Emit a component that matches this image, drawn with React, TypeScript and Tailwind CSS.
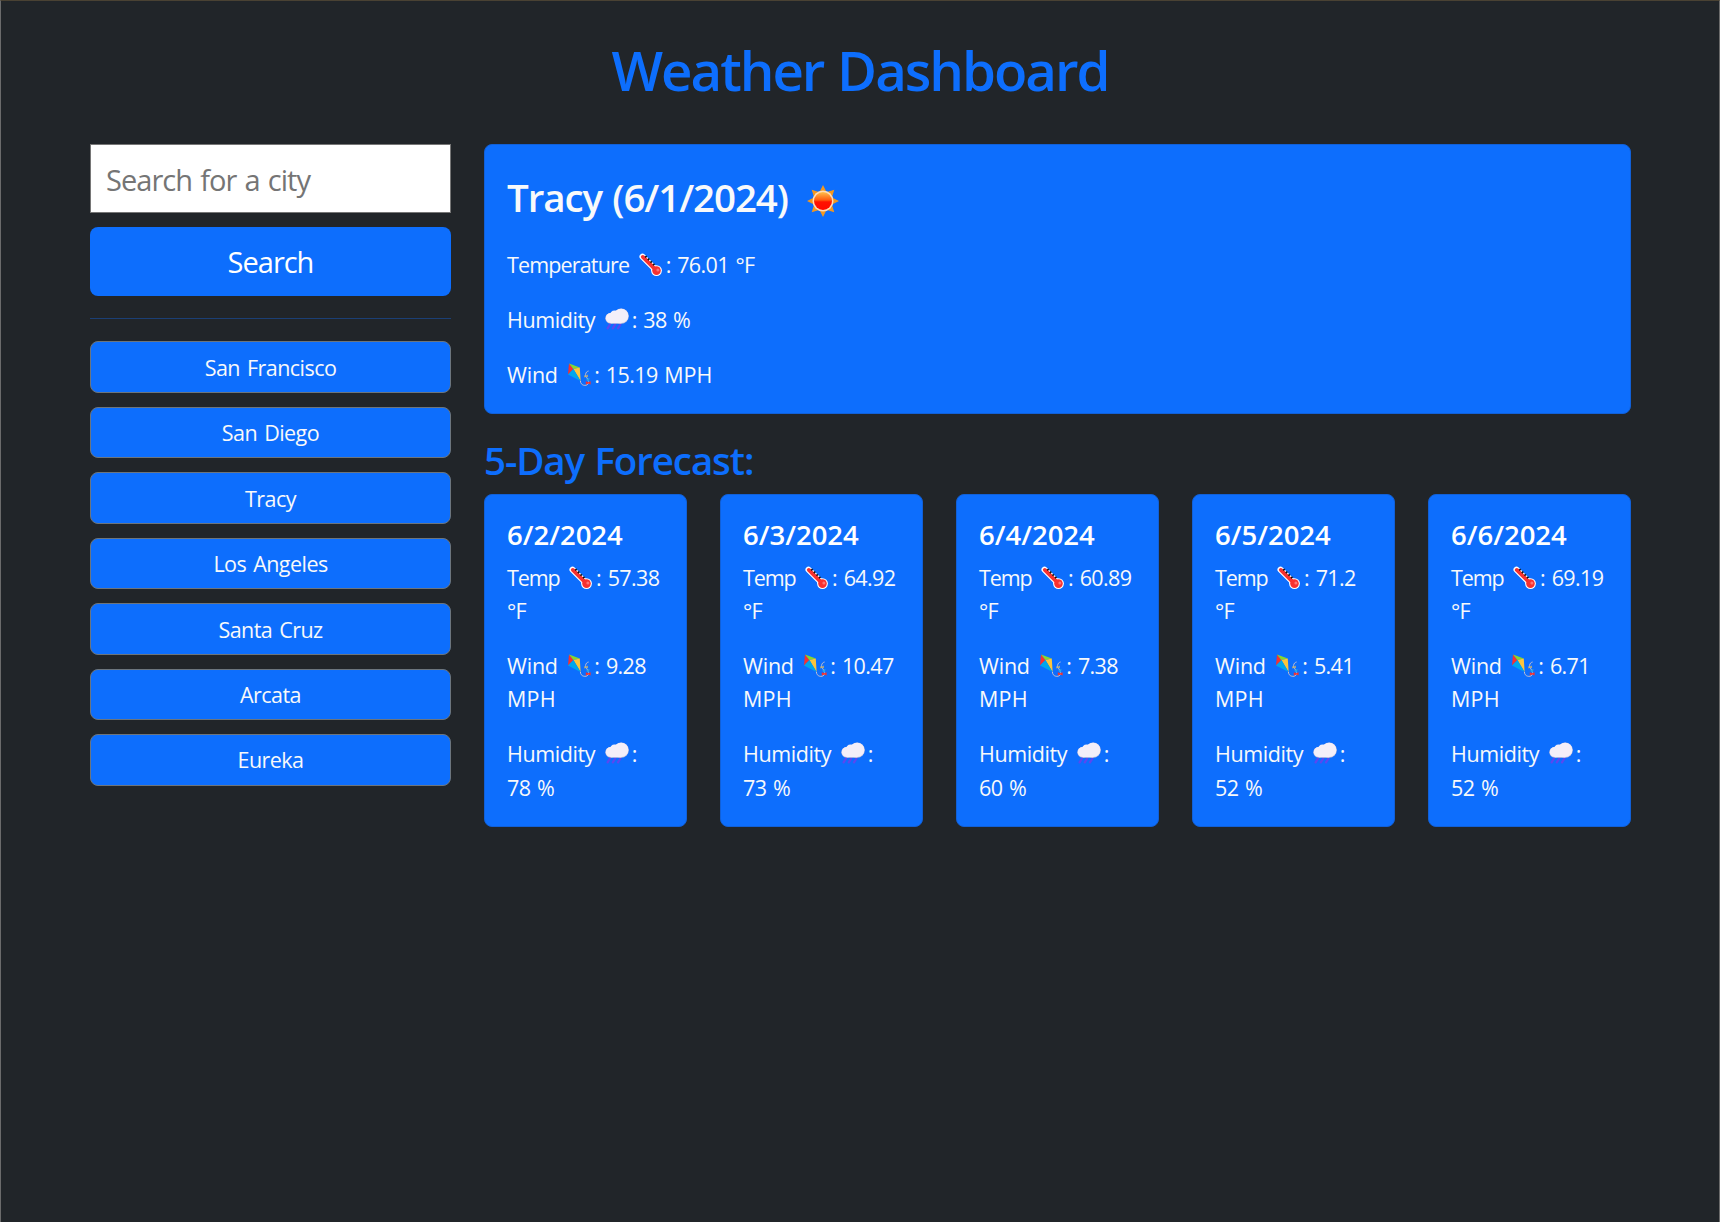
import React from "react";

function Thermometer() {
  return (
    <svg viewBox="0 0 24 24" className="mx-[3px] inline-block h-6 w-6 align-[-4px]">
      <path d="M3.500 3.700L17 17.200" stroke="#fff" strokeWidth="6" strokeLinecap="round" />
      <circle cx="17.500" cy="17.600" r="5.400" fill="#fff" />
      <path d="M3.800 3.900L17 17.200" stroke="#f8312f" strokeWidth="3.800" strokeLinecap="round" />
      <circle cx="17.500" cy="17.600" r="4.300" fill="#f8312f" />
      <circle cx="18.900" cy="16.900" r="1.500" fill="#ff7373" />
      <path d="M6.200 4.400l1.500-1.300M8.800 7l1.500-1.300M11.400 9.600l1.500-1.300M14 12.200l1.500-1.300" stroke="#111" strokeWidth="1.700" />
    </svg>
  );
}

function RainCloud() {
  return (
    <svg viewBox="0 0 24 24" className="mx-[3px] inline-block h-6 w-6 align-[-4px]">
      <path d="M5 16.500l-2.400 3.800M10.200 16.500l-2.400 3.800M15.400 16.500l-2.400 3.800" stroke="#5a48f0" strokeWidth="2.300" strokeLinecap="round" />
      <g fill="#cfc6dc">
        <circle cx="5.600" cy="10.300" r="5.300" />
        <circle cx="16.200" cy="8.100" r="7.600" />
        <path d="M5.600 8H16.200V15.700H5.600Z" />
      </g>
      <g fill="#f4eff9">
        <circle cx="5.700" cy="10" r="4.900" />
        <circle cx="9.600" cy="7.400" r="4.900" />
        <circle cx="16.100" cy="7.900" r="7.200" />
        <path d="M5.700 8H16.100V15.100H5.700Z" />
      </g>
    </svg>
  );
}

function Kite() {
  return (
    <svg viewBox="0 0 24 24" className="mx-[3px] inline-block h-6 w-6 align-[-4px]">
      <path d="M2 .5L6.400 6L1 11.500Z" fill="#f8312f" />
      <path d="M2 .5L12.800 4.600L6.400 6Z" fill="#86d72f" />
      <path d="M12.800 4.600L13.600 18L6.400 6Z" fill="#fcc53c" />
      <path d="M1 11.500L6.400 6L13.600 18Z" fill="#00a6ed" />
      <path d="M13.400 17.800C13.400 24 22.500 23.500 21.600 18.500C21.200 15.500 18.400 14.200 18.600 11.500C18.800 9.500 20 8.300 21.600 8" fill="none" stroke="#c4bfd0" strokeWidth="1" />
      <path d="M17.200 12.300l3.800 1.800-.6-2.600-2.600 3.200z" fill="#fcc53c" />
      <path d="M19.500 15.900l3-.8-.6 3.400-2-1z" fill="#26a6e8" />
      <path d="M18.800 18.200l2.400 1.100 2.400-1v3.200l-2.400-.9-2.400 1z" fill="#f8312f" />
    </svg>
  );
}

function Sun() {
  return (
    <svg viewBox="0 0 34 34" className="ml-[18px] inline-block h-[34px] w-[34px] align-[-6px]">
      <defs>
        <linearGradient id="sunFace" x1="0" y1="0" x2="0" y2="1">
          <stop offset="0" stopColor="#ffc04a" />
          <stop offset="0.450" stopColor="#ff5a10" />
          <stop offset="0.550" stopColor="#ff1200" />
          <stop offset="1" stopColor="#ff0a00" />
        </linearGradient>
      </defs>
      <path
        d="M17 1L20.500 8H13.500ZM28.300 5.700L26 13L21 8ZM33 17L26 20.500V13.500ZM28.300 28.300L21 26L26 21ZM17 33L13.500 26H20.500ZM5.700 28.300L8 21L13 26ZM1 17L8 13.500V20.500ZM5.700 5.700L13 8L8 13Z"
        fill="#f2971f"
      />
      <circle cx="17" cy="17" r="10.500" fill="#ffdcb8" />
      <circle cx="17" cy="17" r="9" fill="url(#sunFace)" />
    </svg>
  );
}

const cities = ["San Francisco", "San Diego", "Tracy", "Los Angeles", "Santa Cruz", "Arcata", "Eureka"];

const forecast = [
  { date: "6/2/2024", temp: "57.38", wind: "9.28", humidity: "78" },
  { date: "6/3/2024", temp: "64.92", wind: "10.47", humidity: "73" },
  { date: "6/4/2024", temp: "60.89", wind: "7.38", humidity: "60" },
  { date: "6/5/2024", temp: "71.2", wind: "5.41", humidity: "52" },
  { date: "6/6/2024", temp: "69.19", wind: "6.71", humidity: "52" },
];

export default function App() {
  return (
    <div className="h-[1222px] border-x border-t border-x-[#6b6b6b] border-t-[#4a4233] bg-[#212529] font-['Open_Sans','Noto_Sans',sans-serif] text-[21.5px] leading-[33.2px] tracking-[-0.6px] text-[#f8f9fa] [word-spacing:1.5px]">
      <h1 className="flex h-[143px] items-start justify-center pt-[36px] text-[54.6px] leading-[66px] font-semibold tracking-[-2px] text-[#0d6efd]">
        Weather Dashboard
      </h1>
      <div className="flex gap-[33px] px-[89px]">
        <aside className="w-[361px] shrink-0">
          <input
            placeholder="Search for a city"
            className="block h-[69px] w-full rounded-none border border-[#767676] bg-white pr-4 pb-px pl-[15px] pt-[3px] text-[29px] tracking-[-0.95px] [word-spacing:1.5px] placeholder:text-[#757575]"
          />
          <button className="mt-[14px] block h-[69px] w-full rounded-lg bg-[#0d6efd] pt-px text-[29px] tracking-[-1px] text-white">
            Search
          </button>
          <hr className="mt-[22px] mb-[22.2px] border-t border-[#1b3f75]" />
          <div className="flex flex-col gap-[13.9px]">
            {cities.map((city) => (
              <button key={city} className="h-[51.6px] w-full rounded-lg border border-[#6c757d] bg-[#0d6efd] pt-[0.4px] tracking-[-0.55px] [word-spacing:2px]">
                {city}
              </button>
            ))}
          </div>
        </aside>
        <main className="w-[1147px] shrink-0">
          <section className="h-[270px] rounded-lg border border-[#1160d7] bg-[#0d6efd] px-[22px] pt-[29px]">
            <h2 className="h-[73.6px] text-[38.5px] leading-[46.4px] font-semibold tracking-[-1.1px]">
              Tracy (6/1/2024)
              <Sun />
            </h2>
            <p className="mb-[22px] h-[33.2px]"><span className="tracking-[-0.85px]">Temperature</span> <Thermometer />: 76.01 °F</p>
            <p className="mb-[22px] h-[33.2px]"><span className="tracking-[-0.4px]">Humidity</span> <RainCloud />: 38 %</p>
            <p className="h-[33.2px]"><span className="tracking-[-0.2px]">Wind</span> <Kite />: 15.19 <span className="tracking-[0px]">MPH</span></p>
          </section>
          <h2 className="mt-[23px] mb-[10.6px] text-[38.5px] leading-[46.4px] font-semibold tracking-[-1.1px] text-[#0d6efd]">
            5-Day Forecast:
          </h2>
          <div className="grid grid-cols-5 gap-[33px]">
            {forecast.map((day) => (
              <section key={day.date} className="h-[333px] rounded-lg border border-[#1160d7] bg-[#0d6efd] px-[22px] pt-[23px]">
                <h3 className="mb-[10px] text-[27.5px] font-semibold tracking-[0px] text-white">{day.date}</h3>
                <p className="mb-[21.4px] h-[66.4px]"><span className="tracking-[-1.1px]">Temp</span> <Thermometer />: {day.temp}<br />°F</p>
                <p className="mb-[22px] h-[66.4px]"><span className="tracking-[-0.2px]">Wind</span> <Kite />: {day.wind}<br /><span className="tracking-[0.2px]">MPH</span></p>
                <p className="h-[66.4px]"><span className="tracking-[-0.4px]">Humidity</span> <RainCloud />:<br />{day.humidity} %</p>
              </section>
            ))}
          </div>
        </main>
      </div>
    </div>
  );
}
